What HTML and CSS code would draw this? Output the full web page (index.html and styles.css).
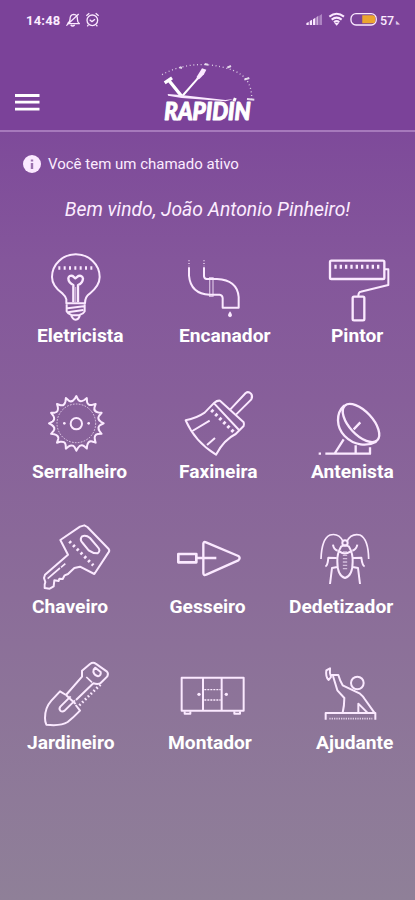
FILE: index.html
```html
<!DOCTYPE html>
<html lang="pt-BR">
<head>
<meta charset="utf-8">
<meta name="viewport" content="width=device-width, initial-scale=1">
<title>Rapidin</title>
<link rel="stylesheet" href="styles.css">
</head>
<body>
<header class="header">
  <div class="status">
    <span class="time">14:48</span>
    <svg class="status-left" viewBox="195 33 110 52">
      <path d="M203 70q7-3 7-13 0-13 11-14 12 1 11 14 0 10 6 14zM212 75q6 6 12 0M199 77l37-35" stroke-width="4"/>
      <circle cx="277" cy="61" r="16" stroke-width="4"/><path d="M269 59l7 6 9-7M259 47l9-7M287 40l9 7M265 75l-3 4M289 75l3 4" stroke-width="4"/>
    </svg>
    <svg class="status-right" viewBox="915 33 220 52">
      <g class="solid"><path d="M919 75v-6l7-3v9zM929 75V63l7-4v16zM939 75V58l7-5v22z"/><path opacity=".65" d="M949 75V52l6-5v28z"/><path opacity=".4" d="M958 75V47l8-5v33z"/></g>
      <path d="M988 50q22-17 44 0M995 59q15-12 30 0M1002 67q8-7 16 0" stroke-width="6"/><path class="solid" d="M1003 69h14l-7 8z"/>
      <rect x="1053" y="41" width="76" height="34" rx="15" stroke-width="4"/><path class="charge" d="M1087 46h31q8 0 8 8v9q0 7-8 7h-31z"/>
    </svg>
    <span class="percent">57</span><span class="mark">◣</span>
  </div>
  <div class="bar">
    <svg class="menu" viewBox="0 0 25 19"><path d="M0 2.5h24.5M0 9.2h24.5M0 16.2h24.5" stroke-width="2.8"/></svg>
    <svg class="logo" viewBox="60 30 300 190" role="img" aria-label="Rapidin">
      <path d="M66 74q60-33 132-30 97 8 124 49 14 23 13 55" stroke-width="4" stroke-dasharray="3 8" opacity=".75"/>
      <path d="M119 52l7 2M194 42l10 2M262 53l11-5M313 89l15-5M321 147l22 2" stroke-width="6" opacity=".8"/>
      <path d="M74 99l22-15M88 93l37 46" stroke-width="10"/><path d="M127 138l51-58" stroke-width="6"/>
      <path class="solid" d="M171 79l15-24 13 4-7 14-13 13-10 4z"/>
      <path class="solid" d="M83 132l48 4 125 14 25-3-24 7-132-10-41-7z"/>
      <text class="logo-text" x="73" y="209" textLength="259" lengthAdjust="spacingAndGlyphs">RAPIDIN</text>
      <path d="M282 154l4-10" stroke-width="9"/>
    </svg>
  </div>
</header>
<main>
  <div class="notice">
    <svg class="info" viewBox="0 0 18 18"><circle class="solid" cx="9" cy="9" r="9"/><path class="info-mark" d="M9 4.5v2M9 8v6"/></svg>
    <span>Você tem um chamado ativo</span>
  </div>
  <h1 class="welcome">Bem vindo, João Antonio Pinheiro!</h1>
  <div class="services">
    <a class="service">
      <svg class="icon" viewBox="0 -3 390 246">
        <path d="M139 175v-12q-1-8-11-17-32-23-32-50a71.500 68 0 0 1 143 0q0 26-30 50-14 9-14 29z" stroke-width="6"/>
        <path d="M115 69h108" stroke-width="11" stroke-dasharray="6 10"/>
        <path d="M160 172v-52q-15-7-15-20 2-10 13-7l8 7 9-7q12-3 14 8-1 14-15 19v52" stroke-width="7"/><path d="M167 126v45" stroke-width="2"/>
        <path d="M140 178v21q4 8 13 10 4 14 14 15 10-1 13-15 10-2 14-10v-21M143 190l48-6M143 202l47-7M153 211h28" stroke-width="6"/>
      </svg>
      <span class="label eletricista">Eletricista</span>
    </a>
    <a class="service">
      <svg class="icon" viewBox="-30 -3 405 246">
        <path d="M87 67v25q5 55 62 57h30q8 1 9 10v29h48v-32q-4-51-65-54h-31q-7-1-8-8V67" stroke-width="6"/>
        <path d="M87 46v18M132 46v18" stroke-width="6" stroke-dasharray="3 5" opacity=".6"/><path d="M149 99v54M159 99v54M147 98h14M147 154h14" stroke-width="4" opacity=".65"/>
        <path class="solid" d="M210 199q-8 11-5 15 5 5 10 0 3-5-5-15z"/>
      </svg>
      <span class="label encanador">Encanador</span>
    </a>
    <a class="service">
      <svg class="icon" viewBox="0 -3 390 246">
        <rect x="135" y="47" width="163" height="55" rx="4" stroke-width="7"/><path d="M148 65h138" stroke-width="12" stroke-dasharray="7 9"/>
        <path d="M299 73h11v47l-83 20q-7 1-7 14" stroke-width="6"/><rect x="203" y="155" width="35" height="71" rx="4" stroke-width="7"/>
      </svg>
      <span class="label pintor">Pintor</span>
    </a>
    <a class="service">
      <svg class="icon" viewBox="0 0 390 246">
        <path id="blade" stroke-width="6"/>
        <circle cx="169" cy="130" r="58" stroke-width="3" stroke-dasharray="5 4" opacity=".75"/><circle cx="169" cy="131" r="17" stroke-width="6"/><circle class="solid" cx="133" cy="130" r="4"/><circle class="solid" cx="206" cy="130" r="4"/>
      </svg>
      <span class="label serralheiro">Serralheiro</span>
    </a>
    <a class="service">
      <svg class="icon" viewBox="390 0 405 246">
        <path d="M583 68l-29 30q-25 17-57 23 28 64 91 103 24-45 59-62l24-24q2-5 0-11l-71-65q-9-1-17 6zM583 71l74 79" stroke-width="6"/>
        <path d="M631 88l46-49q8-6 16 2 6 8 1 17l-46 46M517 153l52-31M561 195l24-21" stroke-width="6"/>
        <path d="M574 90l74 73" stroke-width="10" stroke-dasharray="8 9"/>
      </svg>
      <span class="label faxineira">Faxineira</span>
    </a>
    <a class="service">
      <svg class="icon" viewBox="0 0 390 246">
        <path d="M178 76c-27 24-24 67 1 92 28 29 67 32 95 17M121 221h134v-19M101 221h7M176 178l-26 41M212 196v25M206 148l20-21" stroke-width="7"/>
        <ellipse cx="228" cy="129" rx="71" ry="35" transform="rotate(47 228 129)" stroke-width="7"/>
      </svg>
      <span class="label antenista">Antenista</span>
    </a>
    <a class="service">
      <svg class="icon" viewBox="0 3 390 246">
        <path d="M121 78l59-40 13-4 9 5 64 66q4 6-1 11l-42 64-43-22-17 4-19 18-10 4-6 11-10-1-2 7-13-2-2 18-12 7-15-2q-1-12 2-18l-4-12 3-10 69-60z" stroke-width="6"/>
        <path d="M186 67q-8 10 2 20l18 22q12 9 27 9 10-8 1-18l-24-28q-12-10-24-5z" stroke-width="6"/><path d="M148 82l72 72" stroke-width="9" stroke-dasharray="7 9"/>
        <path d="M83 194l37-32M123 160l13-11" stroke-width="5"/>
      </svg>
      <span class="label chaveiro">Chaveiro</span>
    </a>
    <a class="service">
      <svg class="icon" viewBox="390 3 405 246">
        <rect x="475" y="120" width="54" height="25" stroke-width="8"/><path d="M529 132h60M550 132V89q1-7 8-4l97 41q8 6 0 13l-96 43q-9 3-9-4z" stroke-width="7"/>
      </svg>
      <span class="label gesseiro">Gesseiro</span>
    </a>
    <a class="service">
      <svg class="icon" viewBox="0 3 390 246">
        <path d="M174 82q-13-26-39-19-25 11-27 72M186 82q12-25 39-19 25 12 26 72" stroke-width="5"/>
        <circle cx="180" cy="87" r="8" stroke-width="6"/><path d="M168 98q12-8 24 0 12 20 11 45 0 42-23 49-23-7-23-49-1-25 11-45zM164 113q15 11 32 0M144 92q2 15 14 18M217 92q-3 15-15 18M121 157q7-1 9-26l24 1M239 157q-7-1-10-26l-24 1M135 210l6-48 16-3M225 210l-6-48-16-3" stroke-width="6"/>
        <path d="M180 112v55" stroke-width="13" stroke-dasharray="4 6" opacity=".65"/>
      </svg>
      <span class="label dedetizador">Dedetizador</span>
    </a>
    <a class="service">
      <svg class="icon" viewBox="0 6 390 246">
        <path d="M138 138l-18-11-26 28q-19 21-19 52 0 12 4 20 43 5 64-8 17-13 37-34l-13-17" stroke-width="6"/>
        <path d="M138 138l48-55V65l24-20q9-7 17-1l34 24q5 5 1 14l-20 20q-7 5-22 1l-52 50M138 138l29 27M152 142l-31 31q-5 7 0 12 6 5 13 0l31-31" stroke-width="6"/>
        <path d="M199 84l17 16" stroke-width="5"/>
        <path d="M226 56l16 13q2 10-8 13-11-3-14-13 0-9 6-13z" stroke-width="6"/><path d="M178 169l66-65" stroke-width="8" stroke-dasharray="5 7"/>
      </svg>
      <span class="label jardineiro">Jardineiro</span>
    </a>
    <a class="service">
      <svg class="icon" viewBox="390 6 405 246">
        <path d="M485 86h186v99H485zM549 86v99M605 86v99" stroke-width="6"/><path d="M494 187v7h17v-7M643 187v7h17v-7" stroke-width="6"/>
        <path d="M553 122h49M553 153h49" stroke-width="4" stroke-dasharray="6 3"/><circle class="solid" cx="537" cy="136" r="5"/><circle class="solid" cx="619" cy="136" r="5"/>
      </svg>
      <span class="label montador">Montador</span>
    </a>
    <a class="service">
      <svg class="icon" viewBox="0 6 390 246">
        <circle cx="217" cy="102" r="19" stroke-width="6"/>
        <path d="M124 64l11-6q-2 16 3 26l-7 9q-10-10-7-29zM139 78h21q5 18 13 31l52 25q9 7 14 16l29 41M173 191q5-21 5-44l-21-23-13-43M220 191v-27l27 27" stroke-width="6"/>
        <path d="M122 212v-20h149v20" stroke-width="6"/><path d="M133 209h129" stroke-width="5" stroke-dasharray="4 3" opacity=".75"/>
      </svg>
      <span class="label ajudante">Ajudante</span>
    </a>
  </div>
</main>
<script src="blade.js"></script>
</body>
</html>
```
FILE: blade.js
```js
// Sixteen hooked teeth around the saw blade centre.
const teeth = 16, cx = 169, cy = 130;
let d = "";
for (let i = 0; i < teeth; i++) {
  const base = (i / teeth) * Math.PI * 2 - Math.PI / 2;
  const at = (r, turn) => {
    const a = base + turn;
    return (cx + r * Math.cos(a)).toFixed(1) + " " + (cy + r * Math.sin(a)).toFixed(1);
  };
  d += (i ? "L" : "M") + at(82, 0) + "L" + at(72, 0.07) + "Q" + at(63, 0.18) + " " + at(74, 0.33);
}
document.getElementById("blade").setAttribute("d", d + "Z");
```
FILE: styles.css
```css
* { box-sizing: border-box; }
body {
  margin: 0;
  width: 415px;
  height: 900px;
  overflow: hidden;
  color: #fcecff;
  font-family: Roboto, "Liberation Sans", sans-serif;
  background: linear-gradient(#7e4a9a 131px, #84569b 260px, #875f9a 400px, #8a6999 540px, #8d7499 700px, #8f8098 900px);
}
svg { display: block; fill: none; stroke: #fbe9ff; stroke-linecap: butt; stroke-linejoin: round; }
.solid { fill: #fbe9ff; stroke: none; }
.header { height: 132px; background: #7b4299; border-bottom: 2px solid #a679bc; }
.status { display: flex; align-items: center; height: 40px; padding-left: 26px; }
.time { width: 39px; font-size: 13px; font-weight: 700; letter-spacing: .2px; }
.status-left { width: 36.7px; height: 17.3px; }
.status-right { width: 73.3px; height: 17.3px; margin-left: 203.3px; }
.charge { fill: #eca52e; stroke: none; }
.percent { width: 15px; margin-left: 1.7px; font-size: 12.5px; font-weight: 500; }
.mark { margin: 3px 0 0 1px; font-size: 5px; opacity: .8; }
.bar { display: flex; height: 90px; }
.menu { width: 25px; height: 19px; margin: 53px 0 0 15px; stroke: #fff; }
.logo { width: 100px; height: 63.3px; margin: 20px 0 0 120px; stroke: #fff; }
.logo-text { fill: #fff; stroke: #fff; stroke-width: 3px; font: italic 900 71px Lato, Roboto, sans-serif; }
.notice { display: flex; align-items: center; gap: 7px; height: 20px; margin: 22px 0 0 23px; font-size: 15px; }
.info { width: 18px; height: 18px; }
.info-mark { stroke: #9b72ae; stroke-width: 2.4; }
.welcome { height: 24px; margin: 24px 0 22px; text-align: center; font-size: 19.3px; font-style: italic; font-weight: 400; line-height: 24px; }
.services { display: grid; grid-template-columns: 130px 135px 130px; grid-auto-rows: 135.7px; margin-left: 20px; }
.service { display: block; }
.icon { width: 100%; height: 82px; }
.label { display: block; width: max-content; color: #fff; font-size: 19.2px; font-weight: 700; line-height: 20px; }
.eletricista { margin-left: 17px; }
.encanador { margin-left: 29px; }
.pintor { margin-left: 46px; }
.serralheiro { margin-left: 12px; }
.faxineira { margin-left: 29px; }
.antenista { margin-left: 26px; }
.chaveiro { margin-left: 12px; }
.gesseiro { margin-left: 19.500px; }
.dedetizador { margin-left: 4px; }
.jardineiro { margin-left: 7px; }
.montador { margin-left: 18px; }
.ajudante { margin-left: 31px; }
```
